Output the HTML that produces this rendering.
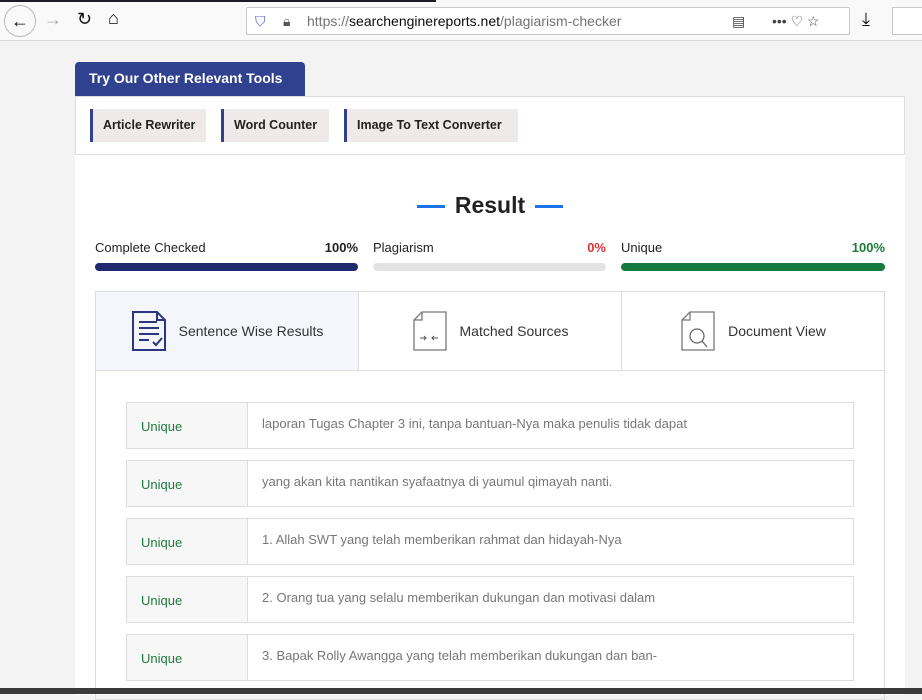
<!DOCTYPE html>
<html><head><meta charset="utf-8"><style>
*{box-sizing:border-box;margin:0;padding:0}
body{width:922px;height:694px;overflow:hidden;background:#f3f3f3;font-family:"Liberation Sans",sans-serif;position:relative}
.bar{position:absolute;left:0;top:0;width:922px;height:41px;background:#f9f9fa;border-bottom:1px solid #d7d7db}
.top{position:absolute;left:0;top:0;width:436px;height:2px;background:#1c1b22}
.url{position:absolute;left:246px;top:7px;width:604px;height:28px;background:#fff;border:1px solid #c8c8cc;border-radius:2px;font-size:14px;color:#737373;line-height:26px;padding-left:60px}
.url b{font-weight:normal;color:#0c0c0d}
.ic{position:absolute;font-size:18px;color:#0c0c0d}
.tab{position:absolute;left:75px;top:62px;width:230px;height:34px;background:#30418f;color:#fff;font-weight:bold;font-size:14px;line-height:33px;padding-left:14px;border-radius:4px 4px 0 0}
.tools{position:absolute;left:75px;top:96px;width:830px;height:59px;background:#fff;border:1px solid #dcdcdc}
.t{position:absolute;top:12px;height:33px;background:#efe9e9;border-left:3px solid #30418f;font-size:12.5px;font-weight:bold;color:#222;line-height:33px;padding-left:10px}
.main{position:absolute;left:75px;top:155px;width:830px;height:540px;background:#fff}
h2{position:absolute;left:0;width:830px;top:37px;text-align:center;font-size:23px;color:#222}
h2 span{display:inline-block;width:28px;height:3px;background:#1a73e8;vertical-align:middle;margin:0 10px}
.lab{position:absolute;top:85px;font-size:13px;color:#222}
.r{text-align:right;width:60px}
.pb{position:absolute;top:108px;height:8px;border-radius:4px}
.tabs{position:absolute;left:20px;top:136px;width:790px;height:80px;border:1px solid #ddd;display:flex}
.tabs div{flex:1;border-right:1px solid #ddd;font-size:14px;color:#333;display:flex;align-items:center;justify-content:center;gap:12px}
.box{position:absolute;left:20px;top:215px;width:790px;height:330px;border:1px solid #ddd;border-top:none}
.row{position:absolute;left:30px;width:728px;height:47px;border:1px solid #ddd;display:flex}
.row .u{width:121px;background:#f7f7f7;border-right:1px solid #ddd;color:#1e7a3c;font-size:13px;padding:16px 0 0 14px}
.row .s{font-size:13px;color:#777;padding:13px 0 0 14px}
</style></head><body>
<div class="bar"><div class="top"></div>
<div class="ic" style="left:4px;top:5px;width:32px;height:32px;border:1px solid #bbb;border-radius:50%;text-align:center;line-height:30px">←</div>
<div class="ic" style="left:44px;top:9px;color:#aaa">→</div>
<div class="ic" style="left:77px;top:9px">↻</div>
<div class="ic" style="left:108px;top:8px">⌂</div>
<div class="url"><span style="position:absolute;left:8px;top:0;color:#5b5bd6">⛉</span><span style="position:absolute;left:36px;top:0;color:#555">🔒︎</span>https://<b>searchenginereports.net</b>/plagiarism-checker<span style="position:absolute;left:485px;color:#444">▤</span><span style="position:absolute;left:525px;color:#444">••• ♡ ☆</span></div>
<div class="ic" style="left:862px;top:9px">⤓</div>
<div style="position:absolute;left:892px;top:7px;width:40px;height:28px;background:#fff;border:1px solid #c8c8cc"></div>
</div>
<div class="tab">Try Our Other Relevant Tools</div>
<div class="tools">
<div class="t" style="left:14px;width:116px">Article Rewriter</div>
<div class="t" style="left:145px;width:108px">Word Counter</div>
<div class="t" style="left:268px;width:174px">Image To Text Converter</div>
</div>
<div class="main">
<h2><span></span>Result<span></span></h2>
<div class="lab" style="left:20px">Complete Checked</div><div class="lab r" style="left:223px;font-weight:bold">100%</div>
<div class="lab" style="left:298px">Plagiarism</div><div class="lab r" style="left:471px;font-weight:bold;color:#d33">0%</div>
<div class="lab" style="left:546px">Unique</div><div class="lab r" style="left:750px;font-weight:bold;color:#1e7a3c">100%</div>
<div class="pb" style="left:20px;width:263px;background:#1f2a6e"></div>
<div class="pb" style="left:298px;width:233px;background:#e3e3e3"></div>
<div class="pb" style="left:546px;width:264px;background:#157a3d"></div>
<div class="tabs">
<div style="background:#f5f6fc"><svg width="36" height="42" viewBox="0 0 36 42"><path d="M2 2h24l8 8v30H2z" fill="none" stroke="#2b3580" stroke-width="2"/><path d="M26 2v8h8M8 12h18M8 18h20M8 24h20M8 30h10M22 32l3 3 6-7" fill="none" stroke="#2b3580" stroke-width="2"/></svg>Sentence Wise Results</div>
<div><svg width="36" height="42" viewBox="0 0 36 42"><path d="M10 2h24v38H2V10z M10 2v8H2" fill="none" stroke="#777" stroke-width="1.3"/><path d="M8 28h6M12 26l2 2-2 2M26 28h-6M22 26l-2 2 2 2" fill="none" stroke="#555"/></svg>Matched Sources</div>
<div style="border-right:none"><svg width="36" height="42" viewBox="0 0 36 42"><path d="M10 2h24v38H2V10z M10 2v8H2" fill="none" stroke="#777" stroke-width="1.3"/><circle cx="17" cy="26" r="7" fill="none" stroke="#666" stroke-width="1.3"/><path d="M22 31l5 6" stroke="#666" stroke-width="1.3"/></svg>Document View</div>
</div>
<div class="box">
<div class="row" style="top:32px"><div class="u">Unique</div><div class="s">laporan Tugas Chapter 3 ini, tanpa bantuan-Nya maka penulis tidak dapat</div></div>
<div class="row" style="top:90px"><div class="u">Unique</div><div class="s">yang akan kita nantikan syafaatnya di yaumul qimayah nanti.</div></div>
<div class="row" style="top:148px"><div class="u">Unique</div><div class="s">1. Allah SWT yang telah memberikan rahmat dan hidayah-Nya</div></div>
<div class="row" style="top:206px"><div class="u">Unique</div><div class="s">2. Orang tua yang selalu memberikan dukungan dan motivasi dalam</div></div>
<div class="row" style="top:264px"><div class="u">Unique</div><div class="s">3. Bapak Rolly Awangga yang telah memberikan dukungan dan ban-</div></div>
</div>
</div>
<div style="position:absolute;left:0;top:688px;width:922px;height:6px;background:#3a3a3a"></div>
</body></html>
